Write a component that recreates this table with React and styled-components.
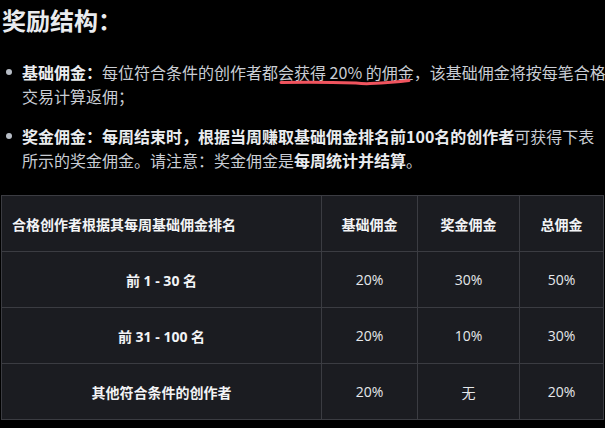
import React from 'react';
import styled, { createGlobalStyle } from 'styled-components';

const GlobalStyle = createGlobalStyle`
  html, body {
    margin: 0;
    padding: 0;
    background: #000;
  }
  body {
    font-family: "Noto Sans CJK SC", "Noto Sans", sans-serif;
    color: #c9cdd4;
  }
`;

const Page = styled.div`
  width: 605px;
  height: 428px;
  overflow: hidden;
  padding: 0 0 0 1px;
  box-sizing: border-box;
`;

const Title = styled.h2`
  margin: 2px 0 0 1px;
  font-size: 24px;
  line-height: 36px;
  font-weight: 700;
  color: #eaecef;
`;

const List = styled.ul`
  list-style: none;
  margin: 22px -24px 0 0;
  padding: 0 0 0 21px;
`;

const Item = styled.li`
  position: relative;
  font-size: 16px;
  line-height: 24px;
  margin-top: ${p => (p.first ? 0 : '16px')};
  max-width: ${p => p.maxw}px;

  &::before {
    content: '';
    position: absolute;
    left: -16px;
    top: 9px;
    width: 6px;
    height: 6px;
    border-radius: 50%;
    background: #b7bdc6;
  }
`;

const Strong = styled.b`
  font-weight: 700;
  color: #eaecef;
`;

const Marked = styled.span`
  position: relative;
`;

const Scribble = styled.svg`
  position: absolute;
  left: 2px;
  top: 18px;
  width: 130px;
  height: 8px;
  overflow: visible;
  pointer-events: none;
`;

const Table = styled.table`
  margin-top: 23px;
  width: 602px;
  border-collapse: collapse;
  background: #1b1c21;
  font-size: 14px;
  table-layout: fixed;
`;

const Cell = styled.td`
  border: 1px solid #3b3c42;
  height: 56px;
  padding: 0 10px;
  box-sizing: border-box;
  text-align: ${p => (p.left ? 'left' : 'center')};
  font-weight: ${p => (p.bold ? 700 : 400)};
  color: ${p => (p.bold ? '#f2f3f5' : '#e6e8eb')};
  font-family: ${p =>
    p.num ? '"Open Sans", "Noto Sans CJK SC", sans-serif' : '"Noto Sans CJK SC", sans-serif'};
`;

const rows = [
  ['前 1 - 30 名', '20%', '30%', '50%'],
  ['前 31 - 100 名', '20%', '10%', '30%'],
  ['其他符合条件的创作者', '20%', '无', '20%'],
];

export default function App() {
  return (
    <Page>
      <GlobalStyle />
      <Title>奖励结构：</Title>
      <List>
        <Item first maxw={588}>
          <Strong>基础佣金：</Strong>每位符合条件的创作者都
          <Marked>
            会获得 20% 的佣金
            <Scribble viewBox="0 0 130 8">
              <path
                d="M1 4.5 C 30 4, 60 4.5, 76 5 C 80 5.5, 84 5.8, 90 5.6 C 105 5, 118 4, 129 2.5"
                fill="none"
                stroke="#f0545e"
                strokeWidth="3"
                strokeLinecap="round"
              />
            </Scribble>
          </Marked>
          ，该基础佣金将按每笔合格交易计算返佣；
        </Item>
        <Item maxw={574}>
          <Strong>奖金佣金：每周结束时，根据当周赚取基础佣金排名前100名的创作者</Strong>
          可获得下表所示的奖金佣金。请注意：奖金佣金是<Strong>每周统计并结算</Strong>。
        </Item>
      </List>
      <Table>
        <colgroup>
          <col style={{ width: 320 }} />
          <col style={{ width: 96 }} />
          <col style={{ width: 102 }} />
          <col style={{ width: 84 }} />
        </colgroup>
        <thead>
          <tr>
            <Cell as="th" left bold>合格创作者根据其每周基础佣金排名</Cell>
            <Cell as="th" bold>基础佣金</Cell>
            <Cell as="th" bold>奖金佣金</Cell>
            <Cell as="th" bold>总佣金</Cell>
          </tr>
        </thead>
        <tbody>
          {rows.map(r => (
            <tr key={r[0]}>
              <Cell bold num>{r[0]}</Cell>
              <Cell num>{r[1]}</Cell>
              <Cell num>{r[2]}</Cell>
              <Cell num>{r[3]}</Cell>
            </tr>
          ))}
        </tbody>
      </Table>
    </Page>
  );
}
